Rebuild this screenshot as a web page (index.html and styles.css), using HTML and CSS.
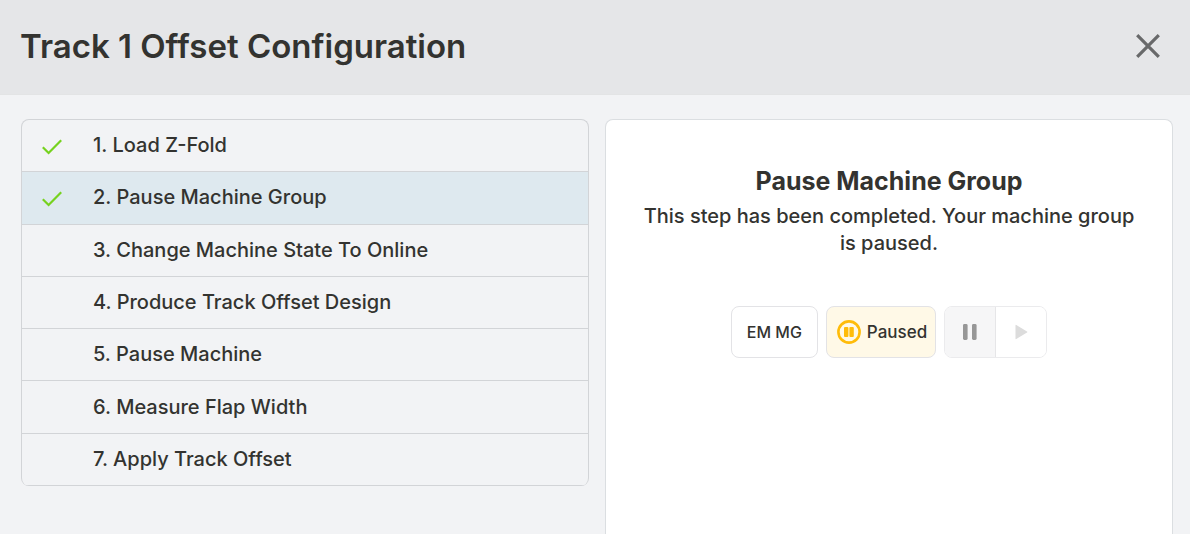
FILE: index.html
```html
<!DOCTYPE html>
<html lang="en">
<head>
<meta charset="utf-8">
<title>Track 1 Offset Configuration</title>
<link rel="stylesheet" href="styles.css">
</head>
<body>
<div class="page">
  <header class="header">
    <h1 class="title">Track 1 Offset Configuration</h1>
    <button class="close" type="button" aria-label="Close">
      <svg width="24" height="24" viewBox="0 0 24 24" fill="none" stroke="#68696a" stroke-width="3.2"><path d="M1.2 1.2 22.8 22.8M22.8 1.2 1.2 22.8"/></svg>
    </button>
  </header>
  <main class="content">
    <ol class="steps">
      <li class="step"><span class="mark"><svg width="20" height="16" viewBox="0 0 20 16" fill="none" stroke="#76d21f" stroke-width="2.2"><path d="M.8 8.2 6.6 14 19.2 1.2"/></svg></span>1. Load Z-Fold</li>
      <li class="step current"><span class="mark"><svg width="20" height="16" viewBox="0 0 20 16" fill="none" stroke="#76d21f" stroke-width="2.2"><path d="M.8 8.2 6.6 14 19.2 1.2"/></svg></span>2. Pause Machine Group</li>
      <li class="step"><span class="mark"></span>3. Change Machine State To Online</li>
      <li class="step"><span class="mark"></span>4. Produce Track Offset Design</li>
      <li class="step"><span class="mark"></span>5. Pause Machine</li>
      <li class="step"><span class="mark"></span>6. Measure Flap Width</li>
      <li class="step"><span class="mark"></span>7. Apply Track Offset</li>
    </ol>
    <section class="panel">
      <h2 class="panel-title">Pause Machine Group</h2>
      <p class="panel-text">This step has been completed. Your machine group is paused.</p>
      <div class="controls">
        <span class="chip">EM MG</span>
        <span class="chip paused">
          <svg width="24" height="24" viewBox="0 0 24 24"><circle cx="12" cy="12" r="10.6" fill="none" stroke="#ffbc0a" stroke-width="2.6"/><rect x="7" y="7" width="4.4" height="10" rx="1" fill="#ffbc0a"/><rect x="12.4" y="7" width="4.4" height="10" rx="1" fill="#ffbc0a"/></svg>
          Paused
        </span>
        <div class="toggle">
          <button class="toggle-button pause" type="button" aria-label="Pause" disabled><svg width="16" height="16" viewBox="0 0 16 16" fill="#979797"><rect x="1" y="0" width="4.6" height="16" rx="1.4"/><rect x="10" y="0" width="4.6" height="16" rx="1.4"/></svg></button>
          <button class="toggle-button" type="button" aria-label="Play" disabled><svg width="14" height="16" viewBox="0 0 14 16" fill="#dcdcdc"><path d="M1.5 1.4Q1.5.6 2.3 1L13 7.4Q13.8 8 13 8.6L2.3 15Q1.5 15.4 1.5 14.6Z"/></svg></button>
        </div>
      </div>
    </section>
  </main>
</div>
</body>
</html>
```
FILE: styles.css
```css
* {
  box-sizing: border-box;
}

body {
  margin: 0;
  background: #f2f3f5;
  color: #333330;
  font-family: Inter, "Open Sans", sans-serif;
  font-size: 20px;
  font-weight: 500;
}

.page {
  display: flex;
  flex-direction: column;
  min-height: 100vh;
}

.header {
  display: flex;
  align-items: center;
  justify-content: space-between;
  padding: 25px 30px 27px 20px;
  background: #e5e6e8;
  border-bottom: 1px solid #e3e4e5;
}

.title {
  margin: 0;
  font-size: 33px;
  font-weight: 600;
  line-height: 42px;
}

.close {
  display: flex;
  padding: 0;
  border: 0;
  background: none;
  cursor: pointer;
}

.content {
  display: grid;
  flex: 1;
  grid-template-columns: 1fr 1fr;
  gap: 16px;
  padding: 24px 17px 0 21px;
}

.steps {
  display: grid;
  grid-auto-rows: 1fr;
  align-self: start;
  min-height: 367px;
  margin: 0;
  padding: 0;
  overflow: hidden;
  border: 1px solid #d2d4d7;
  border-bottom: 0;
  border-radius: 8px;
  list-style: none;
}

.step {
  display: flex;
  align-items: center;
  padding: 0 20px 1px;
  border-bottom: 1px solid #d2d4d7;
  line-height: 26px;
}

.current {
  background: #dee9ef;
}

.mark {
  display: flex;
  width: 51px;
  padding-top: 3px;
}

.panel {
  padding: 47px 36px;
  background: #fff;
  border: 1px solid #dbdee1;
  border-bottom: 0;
  border-radius: 8px 8px 0 0;
  text-align: center;
}

.panel-title {
  margin: 0;
  font-size: 25px;
  font-weight: 700;
  line-height: 28px;
}

.panel-text {
  margin: 8px 0 49px;
  line-height: 27px;
}

.controls {
  display: flex;
  justify-content: center;
  gap: 8px;
}

.chip,
.toggle {
  display: flex;
  height: 52px;
  border: 1px solid #e3e3e6;
  border-radius: 8px;
}

.chip {
  align-items: center;
  gap: 6px;
  padding: 0 15px;
  font-size: 16px;
}

.paused {
  padding: 0 8px 0 10px;
  background: #fff9e7;
  font-size: 17px;
}

.toggle {
  overflow: hidden;
  border-color: #ebebed;
}

.toggle-button {
  display: flex;
  align-items: center;
  justify-content: center;
  width: 50px;
  padding: 0;
  border: 0;
  background: #fff;
}

.pause {
  width: 51px;
  border-right: 1px solid #e6e6e8;
  background: #f6f6f7;
}
```
